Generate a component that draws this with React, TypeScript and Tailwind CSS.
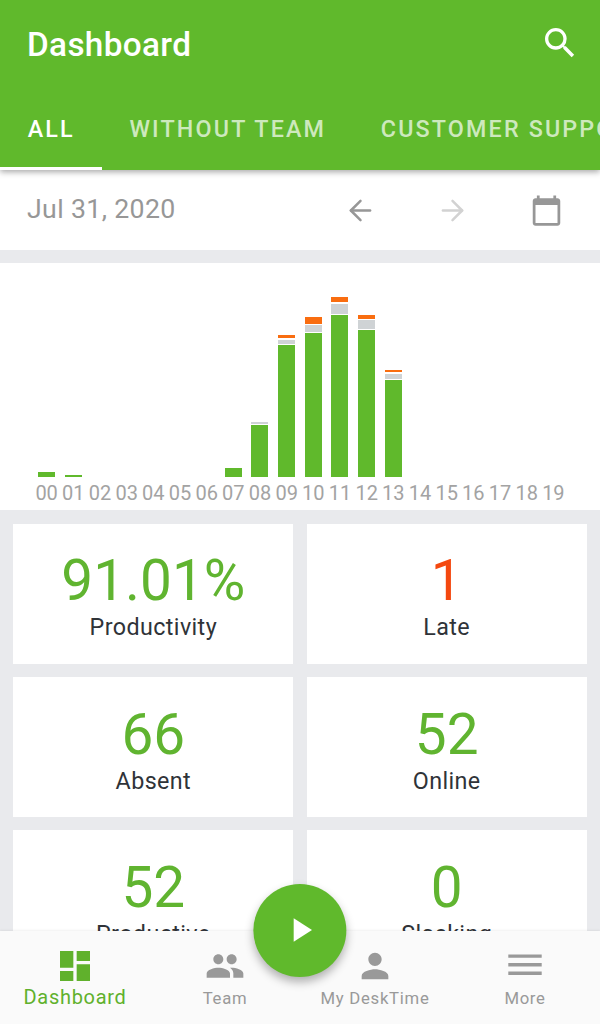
import React, { useState } from 'react';
import { ArrowLeft, ArrowRight } from 'lucide-react';
import { MdDashboard, MdPeople, MdPerson, MdPlayArrow, MdSearch } from 'react-icons/md';

interface HourBar {
  hour: string;
  productive?: number;
  neutral?: number;
  unproductive?: number;
}

interface Stat {
  label: string;
  value: string;
  alert?: boolean;
}

const teams = ['ALL', 'WITHOUT TEAM', 'CUSTOMER SUPPORT'];

// segment sizes are in chart pixels
const hours: HourBar[] = [
  { hour: '00', productive: 5 },
  { hour: '01', productive: 2 },
  { hour: '02' },
  { hour: '03' },
  { hour: '04' },
  { hour: '05' },
  { hour: '06' },
  { hour: '07', productive: 8.5 },
  { hour: '08', productive: 52, neutral: 2 },
  { hour: '09', productive: 132, neutral: 4, unproductive: 3.7 },
  { hour: '10', productive: 143.5, neutral: 7, unproductive: 7 },
  { hour: '11', productive: 162, neutral: 10, unproductive: 5 },
  { hour: '12', productive: 147, neutral: 8.7, unproductive: 3.7 },
  { hour: '13', productive: 97, neutral: 5, unproductive: 2 },
  { hour: '14' },
  { hour: '15' },
  { hour: '16' },
  { hour: '17' },
  { hour: '18' },
  { hour: '19' },
];

const stats: Stat[] = [
  { label: 'Productivity', value: '91.01%' },
  { label: 'Late', value: '1', alert: true },
  { label: 'Absent', value: '66' },
  { label: 'Online', value: '52' },
  { label: 'Productive', value: '52' },
  { label: 'Slacking', value: '0' },
];

function CalendarIcon() {
  return (
    <svg viewBox="0 0 24 24" className="h-[33px] w-[33px]" fill="currentColor">
      <path d="M20 3h-1V1h-2v2H7V1H5v2H4c-1.1 0-2 .9-2 2v16c0 1.1.9 2 2 2h16c1.1 0 2-.9 2-2V5c0-1.1-.9-2-2-2zm0 18H4V8h16v13z" />
    </svg>
  );
}

function MenuIcon() {
  return (
    <svg viewBox="0 0 40 40" className="h-10 w-10" fill="currentColor">
      <path d="M3.3 8.5h33.4v3.3H3.3zM3.3 17h33.4v3.4H3.3zM3.3 25.5h33.4v3.4H3.3z" />
    </svg>
  );
}

function Header({ active, onSelect }: { active: string; onSelect: (team: string) => void }) {
  return (
    <header className="relative z-10 h-[170px] shrink-0 overflow-visible bg-[#60b92c] text-white shadow-[0_2px_6px_rgba(0,0,0,0.35)]">
      <div className="flex h-[86px] items-center justify-between pl-[27px] pr-5">
        <h1 className="pt-1 text-[33.3px] font-medium leading-none tracking-[0.35px]">Dashboard</h1>
        <MdSearch className="h-10 w-10" />
      </div>
      <nav className="flex h-[84px] overflow-hidden">
        {teams.map(team => (
          <button
            key={team}
            onClick={() => onSelect(team)}
            className={`shrink-0 whitespace-nowrap border-b-[3px] pl-[27.7px] pr-[27px] pt-[5px] text-[23.3px] font-medium tracking-[2.15px] ${
              team === active ? 'border-white' : 'border-transparent text-white/70'
            }`}
          >
            {team}
          </button>
        ))}
      </nav>
    </header>
  );
}

function HoursChart() {
  return (
    <section className="mt-[13.3px] h-[246.7px] shrink-0 bg-white px-[33.3px] pt-[13.7px]">
      <div className="grid h-[200px] grid-cols-20">
        {hours.map(({ hour, productive, neutral, unproductive }) => (
          <div key={hour} className="flex flex-col items-center justify-end gap-[1.3px]">
            {unproductive && <div className="w-[17px] bg-[#f96d10]" style={{ height: unproductive }} />}
            {neutral && <div className="w-[17px] bg-[#cfd3d5]" style={{ height: neutral }} />}
            {productive && <div className="w-[17px] bg-[#60b92c]" style={{ height: productive }} />}
          </div>
        ))}
      </div>
      <div className="grid grid-cols-20 pt-px text-[20px] leading-[30px] text-[#a3a3a3]">
        {hours.map(({ hour }) => (
          <span key={hour} className="text-center">{hour}</span>
        ))}
      </div>
    </section>
  );
}

function StatCard({ label, value, alert }: Stat) {
  return (
    <div className="flex h-[140px] flex-col items-center bg-white pt-[27.7px]">
      <div className={`text-[56.7px] leading-[60px] ${alert ? 'text-[#f4480f]' : 'text-[#60b430]'}`}>{value}</div>
      <div className="text-[23.3px] leading-[33px] tracking-[0.4px] text-[#2f3338]">{label}</div>
    </div>
  );
}

export default function App() {
  const [activeTeam, setActiveTeam] = useState('ALL');

  return (
    <div className="flex h-[1024px] w-[600px] flex-col overflow-hidden bg-[#e9eaed] font-['Roboto',sans-serif]">
      <Header active={activeTeam} onSelect={setActiveTeam} />

      <div className="flex h-20 shrink-0 items-center bg-white pl-[27px] pr-[37px] text-[#979797]">
        <span className="flex-1 pb-px text-[26.7px] tracking-[0.35px]">Jul 31, 2020</span>
        <ArrowLeft size={33} strokeWidth={1.8} className="mr-[59px]" />
        <ArrowRight size={33} strokeWidth={1.8} className="mr-[61px] text-[#d2d2d2]" />
        <CalendarIcon />
      </div>

      <HoursChart />

      <main className="min-h-0 flex-1 overflow-hidden px-[13.3px] pt-[13.7px]">
        <div className="grid grid-cols-2 gap-[13.3px]">
          {stats.map(stat => (
            <StatCard key={stat.label} {...stat} />
          ))}
        </div>
      </main>

      <footer className="relative h-[93.5px] shrink-0 bg-[#fafafa] text-[#999999] shadow-[0_-1px_2px_rgba(0,0,0,0.06)]">
        <div className="grid grid-cols-4 pt-[15px]">
          <div className="flex flex-col items-center text-[#60b12c]">
            <MdDashboard className="h-10 w-10" />
            <span className="text-[20px] leading-[22px] tracking-[0.7px]">Dashboard</span>
          </div>
          <div className="flex flex-col items-center">
            <MdPeople className="h-10 w-10" />
            <span className="text-[16.7px] leading-[25px] tracking-[0.7px]">Team</span>
          </div>
          <div className="flex flex-col items-center">
            <MdPerson className="h-10 w-10" />
            <span className="text-[16.7px] leading-[25px] tracking-[0.75px]">My DeskTime</span>
          </div>
          <div className="flex flex-col items-center">
            <MenuIcon />
            <span className="text-[16.7px] leading-[25px] tracking-[0.7px]">More</span>
          </div>
        </div>
        <button className="absolute -top-[46.7px] left-1/2 flex h-[93.3px] w-[93.3px] -translate-x-1/2 items-center justify-center rounded-full bg-[#60b92c] text-white shadow-[0_5px_10px_rgba(0,0,0,0.3)]">
          <MdPlayArrow className="h-10 w-10" />
        </button>
      </footer>
    </div>
  );
}
